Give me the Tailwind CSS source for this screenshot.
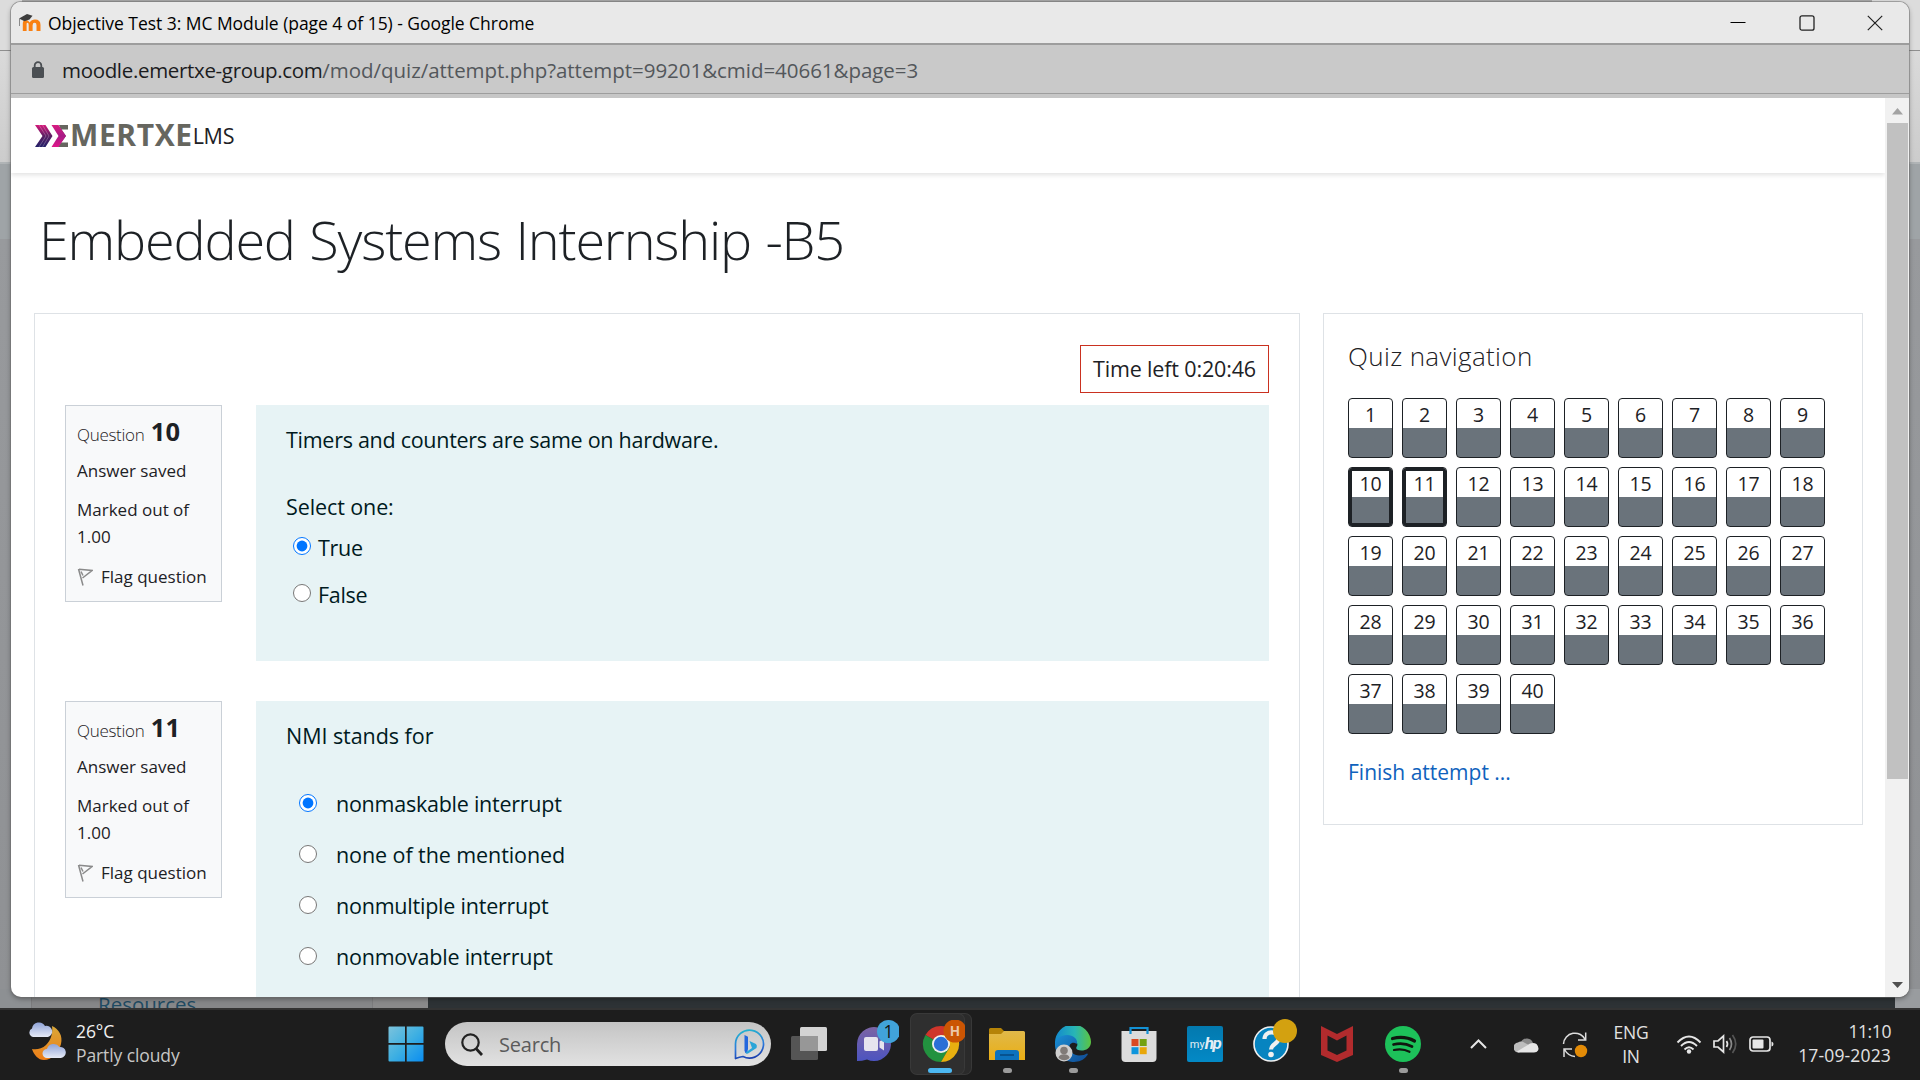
<!DOCTYPE html>
<html lang="en">
<head>
<meta charset="utf-8">
<title>Objective Test 3: MC Module (page 4 of 15)</title>
<script src="https://cdn.jsdelivr.net/npm/@tailwindcss/browser@4"></script>
</head>
<body class="relative h-[1080px] w-[1920px] overflow-hidden bg-[#96999c] font-['Open_Sans',sans-serif] text-[#1d2125]">

<!-- Window behind the quiz popup -->
<div class="flex h-[1008px] flex-col">
  <div class="flex h-[50px] items-start gap-1 bg-[#dcdcdc] pl-[22px]"><div class="h-1 w-[1850px] bg-[#a6a6a6]"></div></div>
  <div class="h-[112px] border-t border-[#8f8f8f] bg-linear-to-b from-[#dadada] to-[#cccccc]"></div>
  <div class="h-[77px] border-t-2 border-[#b0b4b6] bg-[#9fa4a7]"></div>
  <div class="grow bg-linear-to-b from-[#989a9d] to-[#8f9194]"></div>
  <div class="flex h-[19px] items-end">
    <div class="h-full w-[31px] bg-[#8d9093]"></div>
    <div class="h-full w-[342px] overflow-hidden border-x border-[#7c7c7e] bg-[#868789] pl-[66px]"><p class="text-[20.5px] leading-[31px] text-[#1f4b63]">Resources</p></div>
    <div class="h-full w-[55px] bg-[#8a8a8b]"></div>
    <div class="h-full w-[1467px] bg-[#2d3235]"></div>
    <div class="h-full grow bg-[#999c9f]"></div>
  </div>
</div>

<!-- Popup browser window -->
<main class="absolute left-[11px] top-[2px] flex h-[995px] w-[1898px] flex-col overflow-hidden rounded-[10px] bg-white shadow-[0_0_0_1px_rgba(110,110,110,0.5),0_2px_5px_rgba(0,0,0,0.35)]">
  <header class="flex h-[41px] shrink-0 items-center bg-[#e9e9e9] pl-[7px] text-black">
    <svg class="mb-px h-[19px] w-[23px]" viewBox="0 0 23 19"><path d="M4.800 18V10.500q0-3.500 3-3.500 2.800 0 3.800 2.600Q13.400 6.500 17 6.500q5.500 0 5.500 5.500v6h-4v-6q0-2.200-1.900-2.200-2 0-2 2.400V18h-3.900v-6q0-2.200-1.200-2.200T8.600 12v6z" fill="#f98012"/><path d="M1 5.500 9 1l5.500 1.800-3 3.700-5 1.800z" fill="#3d3d3d"/><path d="M1.500 6v7" stroke="#8a8a8a"/></svg>
    <h1 class="ml-[7px] pt-[2px] text-[17.5px] tracking-[-0.04px]">Objective Test 3: MC Module (page 4 of 15) - Google Chrome</h1>
    <div class="ml-auto flex items-center gap-[52.500px] pr-[26px]">
      <svg class="size-4" viewBox="0 0 16 16"><path d="M.5 7.500h15" stroke="#000" stroke-width="1.200"/></svg>
      <svg class="size-4" viewBox="0 0 16 16" fill="none"><rect x="1" y=".8" width="14" height="14.400" rx="2" stroke="#222" stroke-width="1.300"/></svg>
      <svg class="size-4" viewBox="0 0 16 16"><path d="M.8.8l14.400 14.400M15.200.8.8 15.200" stroke="#222" stroke-width="1.200"/></svg>
    </div>
  </header>
  <div class="flex h-[51px] shrink-0 items-center border-b border-t-2 border-[#9d9d9d] bg-[#c9c9c9] pl-[20px] text-[20.5px]">
    <svg class="mt-[2px] h-[18px] w-[14px]" viewBox="0 0 14 18"><rect x="1" y="6" width="12" height="11" rx="1.500" fill="#4b4f53"/><path d="M3.700 7V4.400a3.300 3.300 0 0 1 6.600 0V7" fill="none" stroke="#4b4f53" stroke-width="1.800"/></svg>
    <p class="ml-[17px] pt-[2px] tracking-[-0.04px] text-[#53575b]"><span class="tracking-[-0.33px] text-[#1b1c1e]">moodle.emertxe-group.com</span>/mod/quiz/attempt.php?attempt=99201&amp;cmid=40661&amp;page=3</p>
  </div>
  <div class="flex min-h-0 grow border-t-4 border-[#c6c6c6]">
    <div class="flex min-w-0 grow flex-col overflow-hidden">
      <nav class="flex h-[75px] shrink-0 items-center pl-[24px] shadow-[0_2px_5px_rgba(0,0,0,0.12)]">
        <svg class="h-[22px] w-[34px]" viewBox="0 0 34 22">
          <defs>
            <linearGradient id="ga" x2="0" y2="1"><stop stop-color="#d4187a"/><stop offset=".5" stop-color="#5a1f63"/><stop offset="1" stop-color="#232068"/></linearGradient>
            <linearGradient id="gb" x2="0" y2="1"><stop stop-color="#d81b80"/><stop offset=".5" stop-color="#a81a86"/><stop offset="1" stop-color="#e0188a"/></linearGradient>
          </defs>
          <path d="M0 0h10.500l7 11-7 11H0l7.500-11z" fill="url(#ga)"/>
          <path d="M4 0l7 11-7 11M7.500 0l6.500 11-6.500 11" fill="none" stroke="#fff" stroke-width=".5" opacity=".5"/>
          <path d="M24 0h9v4.500h-6.500L31 11l-5 6.500h7V22H21l7-11z" fill="#66665f"/>
          <path d="M16.500 0h7L31 11l-7.500 11h-7L23.500 11z" fill="url(#gb)"/>
        </svg>
        <p class="mb-px ml-px text-[30px] font-bold leading-none tracking-[0.600px] text-[#66665f]">MERTXE</p>
        <p class="pt-[2px] text-[21.5px] tracking-[-0.3px]">LMS</p>
      </nav>
      <h2 class="mt-[26px] pl-[28px] text-[54px] font-light leading-[80px] tracking-[-1.2px] [word-spacing:1.7px]">Embedded Systems Internship -B5</h2>
      <div class="mt-[34px] flex min-h-0 grow items-start gap-[23px] pl-[23px]">
        <section class="flex w-[1266px] shrink-0 flex-col border border-[#dee2e6] px-[30px] pt-[31px]">
          <p class="flex h-[48px] w-[189px] items-center justify-center self-end border border-[#ca3120] text-[21.5px] tracking-[-0.15px]">Time left 0:20:46</p>

          <article class="mt-[12px] flex items-start gap-[34px]">
            <aside class="h-[197px] w-[157px] border border-[#cad0d7] bg-[#f8f9fa] pl-[11px] pt-[9px] text-[17px] leading-[27px]">
              <p class="h-[32px] leading-[32px]"><span class="font-light tracking-[-0.3px]">Question</span> <b class="ml-[2px] text-[25.5px]">10</b></p>
              <p class="mt-[10px]">Answer saved</p>
              <p class="mt-[12px]">Marked out of<br>1.00</p>
              <p class="mt-[13px] flex items-center"><svg class="mr-[8px] h-[18px] w-[16px]" viewBox="0 0 16 18" fill="none" stroke="#8a8a8a" stroke-width="1.500"><path d="M1.500 1 6 17.500M2 1.200l13 1.300-9.500 7.500M4 3.500l2 4"/></svg>Flag question</p>
            </aside>
            <div class="h-[256px] grow bg-[#e7f3f5] pl-[30px] pt-[18px] text-[21.5px] leading-[34px] tracking-[-0.3px] text-[#001a1e]">
              <p class="tracking-[-0.28px]">Timers and counters are same on hardware.</p>
              <p class="mt-[33px] tracking-[-0.1px]">Select one:</p>
              <label class="mt-[7px] flex items-center gap-[7px] pl-[7px]"><input type="radio" name="q10" checked class="mb-[5px] size-[18px]">True</label>
              <label class="mt-[13px] flex items-center gap-[7px] pl-[7px]"><input type="radio" name="q10" class="mb-[5px] size-[18px]">False</label>
            </div>
          </article>

          <article class="mt-[40px] flex items-start gap-[34px]">
            <aside class="h-[197px] w-[157px] border border-[#cad0d7] bg-[#f8f9fa] pl-[11px] pt-[9px] text-[17px] leading-[27px]">
              <p class="h-[32px] leading-[32px]"><span class="font-light tracking-[-0.3px]">Question</span> <b class="ml-[2px] text-[25.5px]">11</b></p>
              <p class="mt-[10px]">Answer saved</p>
              <p class="mt-[12px]">Marked out of<br>1.00</p>
              <p class="mt-[13px] flex items-center"><svg class="mr-[8px] h-[18px] w-[16px]" viewBox="0 0 16 18" fill="none" stroke="#8a8a8a" stroke-width="1.500"><path d="M1.500 1 6 17.500M2 1.200l13 1.300-9.500 7.500M4 3.500l2 4"/></svg>Flag question</p>
            </aside>
            <div class="h-[400px] grow bg-[#e7f3f5] pl-[30px] pt-[18px] text-[21.5px] leading-[34px] tracking-[-0.05px] text-[#001a1e]">
              <p>NMI stands for</p>
              <div class="mt-[25px] flex flex-col pl-[13px] leading-[51px]">
                <label class="flex items-center gap-[19px] tracking-[-0.25px]"><input type="radio" name="q11" checked class="mb-px size-[18px]">nonmaskable interrupt</label>
                <label class="flex items-center gap-[19px] tracking-[-0.08px]"><input type="radio" name="q11" class="mb-px size-[18px]">none of the mentioned</label>
                <label class="flex items-center gap-[19px] tracking-[-0.22px]"><input type="radio" name="q11" class="mb-px size-[18px]">nonmultiple interrupt</label>
                <label class="flex items-center gap-[19px] tracking-[-0.22px]"><input type="radio" name="q11" class="mb-px size-[18px]">nonmovable interrupt</label>
              </div>
            </div>
          </article>
        </section>

        <section class="h-[512px] w-[540px] shrink-0 border border-[#dee2e6] pl-[24px] pt-[24px]">
          <h3 class="text-[26px] font-light leading-[36px] tracking-[0.36px]">Quiz navigation</h3>
          <div id="quiz-nav" class="mt-[24px] grid w-[477px] grid-cols-9 gap-x-[9px] gap-y-[9px]"></div>
          <a class="mt-[21px] block text-[21px] leading-[34px] text-[#0f62bd]">Finish attempt ...</a>
        </section>
      </div>
    </div>
    <div class="flex w-[24px] shrink-0 flex-col items-center justify-between bg-[#f1f1f1] pl-px">
      <svg class="h-[25px] w-[21px] shrink-0" viewBox="0 0 21 25"><path d="M5 16.500 10.500 10l5.500 6.500z" fill="#a3a3a3"/></svg>
      <div class="mb-auto h-[656px] w-[21px] shrink-0 bg-[#c1c1c1]"></div>
      <svg class="h-[25px] w-[21px] shrink-0" viewBox="0 0 21 25"><path d="M5 10h11l-5.500 6z" fill="#505050"/></svg>
    </div>
  </div>
</main>

<!-- Taskbar -->
<footer class="flex h-[72px] items-center border-t-2 border-[#333] bg-[#1d1d1d] pb-[2px] text-[17.5px] leading-[24px] text-[#e2e2e2]">
  <svg class="ml-[28px] h-[44px] w-[38px]" viewBox="0 0 38 44">
    <defs>
      <linearGradient id="moon" x2="0" y2="1"><stop stop-color="#d9a83a"/><stop offset="1" stop-color="#ee7d16"/></linearGradient>
      <linearGradient id="cl" x2="0" y2="1"><stop stop-color="#8fa3d8"/><stop offset="1" stop-color="#e6eaf6"/></linearGradient>
    </defs>
    <path d="M24 4c7 3 11 10 9 18s-9 16-17 16c-6 0-10-5-12-11 4 1 10 0 14-4 5-5 7-12 6-19z" fill="url(#moon)"/>
    <path d="M5 15a4.500 4.500 0 0 1-1-8.500 7 7 0 0 1 13-2.500 5.500 5.500 0 0 1 3 11z" fill="url(#cl)"/>
    <path d="M19 36a4.500 4.500 0 0 1 0-9 7 7 0 0 1 12.500-2A5.500 5.500 0 0 1 33 36z" fill="url(#cl)"/>
  </svg>
  <div class="ml-[10px] w-[312px] pb-[2px] tracking-[-0.1px]"><p class="text-[#f0f0f0]">26°C</p><p class="text-[#c6c6c6]">Partly cloudy</p></div>
  <svg class="size-[36px]" viewBox="0 0 36 36">
    <defs><linearGradient id="win" x2="1" y2="1"><stop stop-color="#7cc3dc"/><stop offset=".5" stop-color="#3fb0e2"/><stop offset="1" stop-color="#0a8df0"/></linearGradient></defs>
    <path d="M1.500.5H17V17H.5V1.500a1 1 0 0 1 1-1zM18.700.5h15.800a1 1 0 0 1 1 1V17H18.700zM.5 18.700H17v16.800H1.500a1 1 0 0 1-1-1zM18.700 18.700h16.800v15.800a1 1 0 0 1-1 1H18.700z" fill="url(#win)"/>
  </svg>
  <div class="ml-[21px] flex h-[44px] w-[326px] items-center rounded-full bg-linear-to-b from-[#c4c4c4] to-[#e2e2e2] pl-[16px] pr-[6px] text-[#5b5b5b]">
    <svg class="h-[23px] w-[22px]" viewBox="0 0 22 23" fill="none" stroke="#222" stroke-width="2.200"><circle cx="9.500" cy="9.500" r="8.200"/><path d="M15 15.500l6 6.500" stroke-width="2.800"/></svg>
    <span class="ml-[16px] pt-[2px] text-[20px] tracking-[-0.2px]">Search</span>
    <svg class="ml-auto size-[31px]" viewBox="0 0 31 31" fill="none">
      <defs><linearGradient id="bing" x1=".3" x2=".5" y2="1"><stop stop-color="#22b3cf"/><stop offset=".6" stop-color="#2b78dc"/><stop offset="1" stop-color="#1b3fae"/></linearGradient></defs>
      <path d="M1.500 29.500V15a14 14 0 1 1 7.500 12.500q-3.500.5-7.500 2z" stroke="url(#bing)" stroke-width="1.700" stroke-linejoin="round"/>
      <path d="M10.500 6l3.500 1.800V20l-1 4.500q-2.500-.5-2.500-3z" fill="#2467dd"/><path d="M15.500 12l6.500 3q1.500 1.500.5 4L14 24.500q-2 .5-2.500-1l6.500-4.500z" fill="#2aa5d8"/>
    </svg>
  </div>

  <div class="ml-[5px] flex">
    <div class="flex h-[60px] w-[66px] items-center justify-center">
      <svg class="size-[36px]" viewBox="0 0 36 36"><rect x="0" y="10" width="27" height="24" rx="1.500" fill="#555"/><rect x="9" y="1" width="27" height="24" rx="1.500" fill="#d3d3d3"/><path d="M9 10h18v15H9z" fill="#979797"/></svg>
    </div>
    <div class="flex h-[60px] w-[66px] items-center justify-center">
      <svg class="size-[48px]" viewBox="0 0 48 48">
        <defs><linearGradient id="chat" x2="0" y2="1"><stop stop-color="#7c64a4"/><stop offset="1" stop-color="#4c54c0"/></linearGradient></defs>
        <path d="M6 41V24a17 17 0 1 1 10 15.500Q11 41 6 41z" fill="url(#chat)"/><rect x="13" y="17" width="14" height="14" rx="2" fill="#e6e4ee"/><path d="M28.500 21.500l4.500-3v12l-4.500-3z" fill="#e6e4ee"/>
        <circle cx="37.500" cy="11.500" r="11.500" fill="#41a3da"/><text x="37.500" y="18" text-anchor="middle" font-size="17.500" fill="#111">1</text>
      </svg>
    </div>
    <div class="relative flex h-[60px] w-[66px] items-center justify-center">
      <div class="absolute left-[6px] top-0 h-[60px] w-[57px] rounded-[6px] bg-[#2a2a2a] ring-1 ring-[#383838]"></div>
      <div class="absolute left-[3px] top-0 h-[60px] w-[53px] rounded-[6px] bg-[#2f2f2f] ring-1 ring-[#393939]"></div>
      <svg class="relative size-[48px]" viewBox="0 0 48 48">
        <path d="M24 24 8.400 15A18 18 0 0 1 39.600 15H24z" fill="#cf352b"/><path d="M8.400 15A18 18 0 0 0 24 42l8-13.500-8-4.500z" fill="#22923f"/><path d="M39.600 15A18 18 0 0 1 24 42l9-15.500L24 15z" fill="#e8b010"/>
        <circle cx="24" cy="24" r="9" fill="#eee"/><circle cx="24" cy="24" r="7.200" fill="#2a6fd6"/>
        <circle cx="38" cy="11" r="11.500" fill="#cb5503"/><text x="38" y="16" text-anchor="middle" font-size="13.500" font-weight="700" fill="#ecc7a8">H</text>
      </svg>
      <div class="absolute left-[20px] top-[54px] h-[5px] w-[24px] rounded-full bg-[#4cb8f2]"></div>
    </div>
    <div class="relative flex h-[60px] w-[66px] items-center justify-center">
      <svg class="size-[36px]" viewBox="0 0 36 36">
        <defs><linearGradient id="fold" x2="0" y2="1"><stop stop-color="#e0b94a"/><stop offset="1" stop-color="#eaae14"/></linearGradient></defs>
        <path d="M0 9V3.500A1.500 1.500 0 0 1 1.500 2H12l3 3v4z" fill="#b58307"/><path d="M0 8h12l3-3h19.500A1.500 1.500 0 0 1 36 6.500V34H0z" fill="url(#fold)"/><path d="M6 34V27a3 3 0 0 1 3-3h18a3 3 0 0 1 3 3v7z" fill="#0c72bd"/><path d="M11 29h14" stroke="#07528f" stroke-width="2"/>
      </svg>
      <div class="absolute left-[29px] top-[54px] h-[5px] w-[9px] rounded-full bg-[#9b9b9b]"></div>
    </div>
    <div class="relative flex h-[60px] w-[66px] items-center justify-center">
      <svg class="size-[36px]" viewBox="0 0 36 36">
        <defs>
          <linearGradient id="eg" x2="1"><stop stop-color="#1289cf"/><stop offset=".55" stop-color="#28b5b5"/><stop offset="1" stop-color="#5cc440"/></linearGradient>
          <linearGradient id="eb" x2="1" y2="1"><stop stop-color="#1a8fd6"/><stop offset="1" stop-color="#104a92"/></linearGradient>
        </defs>
        <path d="M0 17A18 18 0 0 1 36 16c0 6-5 8.500-9.500 8.500-4 0-6-1.500-5-3.500 3-4-2-9-9-9C6 12 1 16 0 22z" fill="url(#eg)"/>
        <path d="M0 19c0-6 6-10 12-10 8 0 11.500 6 9.500 9-2-2-5-1.500-6.500.5-3 5 3 11 9 11 4 0 6-1 8-2 1 0 1 1 0 2-4 6-11 7-16 6.200C7 34.500 0 28 0 19z" fill="url(#eb)"/>
        <circle cx="9" cy="27" r="8.500" fill="#cfcfcf"/><circle cx="9" cy="24.500" r="3.800" fill="#807b78"/><path d="M3.500 32a5.500 3.800 0 0 1 11 0q-5 4.500-11 0z" fill="#807b78"/>
      </svg>
      <div class="absolute left-[29px] top-[54px] h-[5px] w-[9px] rounded-full bg-[#9b9b9b]"></div>
    </div>
    <div class="flex h-[60px] w-[66px] items-center justify-center">
      <svg class="size-[36px]" viewBox="0 0 36 36"><path d="M.5 5h35v27a4 4 0 0 1-4 4h-27a4 4 0 0 1-4-4z" fill="#dcdcdc"/><path d="M9.500 8V2h17v6" fill="none" stroke="#1391d4" stroke-width="2.200"/><path d="M10.500 13h7v7h-7z" fill="#d94a22"/><path d="M18.700 13h7v7h-7z" fill="#73a112"/><path d="M10.500 21.200h7v7h-7z" fill="#0e95dc"/><path d="M18.700 21.200h7v7h-7z" fill="#e8a70a"/></svg>
    </div>
    <div class="flex h-[60px] w-[66px] items-center justify-center">
      <div class="flex size-[36px] items-center justify-center rounded-[2px] bg-linear-to-b from-[#0379ae] to-[#0389c6] font-['Roboto',sans-serif] text-[#e4eef4]"><span class="text-[11px] leading-none">my</span><span class="pb-[2px] text-[17px] font-bold italic leading-none tracking-[-1.500px]">hp</span></div>
    </div>
    <div class="flex h-[60px] w-[66px] items-center justify-center">
      <svg class="size-[52px]" viewBox="0 0 52 52"><circle cx="26" cy="26" r="17" fill="#0784c0" stroke="#f0f0f0" stroke-width="1.600"/><path d="M19.500 21c0-9 14-8.500 14-.5 0 5.500-7.500 5.500-7.500 11" fill="none" stroke="#f0f0f0" stroke-width="4.200"/><circle cx="26" cy="36.500" r="2.800" fill="#f0f0f0"/><circle cx="40" cy="13" r="12" fill="#d3a110"/></svg>
    </div>
    <div class="flex h-[60px] w-[66px] items-center justify-center">
      <svg class="size-[36px]" viewBox="0 0 36 36"><path d="M2 0l16 8 16-8v29l-16 7-16-7zM8.500 9.500v15L18 29l9.500-4.500v-15L18 14.500z" fill="#b22b2d" fill-rule="evenodd"/></svg>
    </div>
    <div class="relative flex h-[60px] w-[66px] items-center justify-center">
      <svg class="size-[36px]" viewBox="0 0 36 36" fill="none" stroke="#10160f" stroke-linecap="round"><circle cx="18" cy="18" r="18" fill="#1dc15a" stroke="none"/><path d="M7.500 12.500q12-3 22 2.500" stroke-width="3.200"/><path d="M8.500 18.500q10-2.500 18.500 2" stroke-width="2.700"/><path d="M9 24q8.500-2 15.500 1.800" stroke-width="2.200"/></svg>
      <div class="absolute left-[29px] top-[54px] h-[5px] w-[9px] rounded-full bg-[#9b9b9b]"></div>
    </div>
  </div>

  <div class="ml-auto flex items-center pr-[29px]">
    <svg class="h-[10px] w-[17px]" viewBox="0 0 17 10" fill="none" stroke="#e6e6e6" stroke-width="2"><path d="M1 9l7.500-7.500L16 9"/></svg>
    <svg class="ml-[27px] h-[17px] w-[25px]" viewBox="0 0 25 17"><path d="M7 6a6.500 6.500 0 0 1 12 1l-4 4z" fill="#8a8a8a"/><path d="M5 16.500A5 5 0 0 1 4 6.500q3-2 7 .5l6 3z" fill="#bdbdbd"/><path d="M3 15.500l10-6q5-4 9.500-1.500 3 3.500 1.500 6.500-1 2-4 2H5q-1.500 0-2-1z" fill="#e6e6e6"/></svg>
    <svg class="ml-[23px] h-[27px] w-[26px]" viewBox="0 0 26 27" fill="none" stroke="#dcdcdc" stroke-width="1.500"><path d="M1.500 13A11.500 11.500 0 0 1 23.500 9M23.700 1.500V9H16M2 26v-8h8M2.500 18.500Q6 25 13 25.500"/><circle cx="19" cy="20" r="6.200" fill="#e38b07" stroke="none"/></svg>
    <div class="ml-[24px] w-[38px] text-center tracking-[-0.2px]"><p>ENG</p><p>IN</p></div>
    <svg class="ml-[26px] h-[19px] w-[26px]" viewBox="0 0 26 19" fill="none" stroke="#e6e6e6" stroke-width="1.900"><path d="M1.500 7.500Q13-4.500 24.500 7.500M5 11q8-8 16 0M8.500 14.500q4.500-4.500 9 0"/><circle cx="13" cy="16.500" r="2.200" fill="#e6e6e6" stroke="none"/></svg>
    <svg class="ml-[11px] h-[20px] w-[25px]" viewBox="0 0 25 20" fill="none" stroke="#e6e6e6" stroke-width="1.700"><path d="M1 7h4l5.500-5v16L5 13H1zM13.500 7q2 3 0 6"/><path d="M16.500 4q4 6 0 12" stroke="#8a8a8a"/><path d="M19.500 1q6.500 9 0 18" stroke="#555"/></svg>
    <svg class="ml-[11px] h-[16px] w-[25px]" viewBox="0 0 25 16"><rect x="1" y="1" width="20" height="14" rx="3" fill="none" stroke="#e6e6e6" stroke-width="1.700"/><rect x="3.500" y="3.500" width="11" height="9" rx="1" fill="#e6e6e6"/><path d="M22.500 5.500q2 .5 2 2.500t-2 2.500z" fill="#e6e6e6"/></svg>
    <div class="ml-[23px] w-[94px] whitespace-nowrap pb-[2px] text-right"><p class="tracking-[-0.4px]">11:10</p><p class="tracking-[0.15px]">17-09-2023</p></div>
  </div>
</footer>

<script>
  // Quiz navigation: 40 questions, the ones on this page get a thick frame
  const nav = document.getElementById('quiz-nav');
  for (let n = 1; n <= 40; n++) {
    const b = document.createElement('a');
    b.className = 'flex h-[60px] w-[45px] justify-center rounded-[4px] border border-[#1d2125] bg-linear-to-b from-white from-50% to-[#6a737b] to-50% text-[19.5px] leading-[31px] tracking-[-0.1px]';
    if (n === 10 || n === 11) b.className += ' shadow-[inset_0_0_0_3px_#1d2125]';
    b.textContent = n;
    nav.append(b);
  }
</script>
</body>
</html>
